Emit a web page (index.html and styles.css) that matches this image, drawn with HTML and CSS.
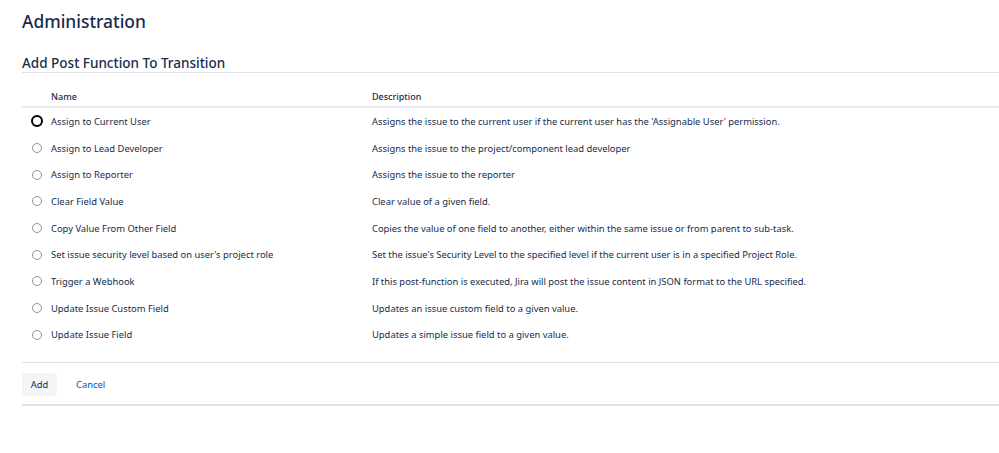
FILE: index.html
```html
<!DOCTYPE html>
<html>
<head>
<meta charset="utf-8">
<link rel="stylesheet" href="styles.css">
</head>
<body>
<div class="page">
  <h1 class="title">Administration</h1>
  <h2 class="subtitle">Add Post Function To Transition</h2>
  <div class="table">
    <div class="row head">
      <div class="cell radio-cell"></div>
      <div class="cell">Name</div>
      <div class="cell">Description</div>
    </div>
    <div class="row">
      <div class="cell radio-cell"><span class="radio focused"></span></div>
      <div class="cell">Assign to Current User</div>
      <div class="cell">Assigns the issue to the current user if the current user has the 'Assignable User' permission.</div>
    </div>
    <div class="row">
      <div class="cell radio-cell"><span class="radio"></span></div>
      <div class="cell">Assign to Lead Developer</div>
      <div class="cell">Assigns the issue to the project/component lead developer</div>
    </div>
    <div class="row">
      <div class="cell radio-cell"><span class="radio"></span></div>
      <div class="cell">Assign to Reporter</div>
      <div class="cell">Assigns the issue to the reporter</div>
    </div>
    <div class="row">
      <div class="cell radio-cell"><span class="radio"></span></div>
      <div class="cell">Clear Field Value</div>
      <div class="cell">Clear value of a given field.</div>
    </div>
    <div class="row">
      <div class="cell radio-cell"><span class="radio"></span></div>
      <div class="cell">Copy Value From Other Field</div>
      <div class="cell">Copies the value of one field to another, either within the same issue or from parent to sub-task.</div>
    </div>
    <div class="row">
      <div class="cell radio-cell"><span class="radio"></span></div>
      <div class="cell">Set issue security level based on user's project role</div>
      <div class="cell">Set the issue's Security Level to the specified level if the current user is in a specified Project Role.</div>
    </div>
    <div class="row">
      <div class="cell radio-cell"><span class="radio"></span></div>
      <div class="cell">Trigger a Webhook</div>
      <div class="cell">If this post-function is executed, Jira will post the issue content in JSON format to the URL specified.</div>
    </div>
    <div class="row">
      <div class="cell radio-cell"><span class="radio"></span></div>
      <div class="cell">Update Issue Custom Field</div>
      <div class="cell">Updates an issue custom field to a given value.</div>
    </div>
    <div class="row">
      <div class="cell radio-cell"><span class="radio"></span></div>
      <div class="cell">Update Issue Field</div>
      <div class="cell">Updates a simple issue field to a given value.</div>
    </div>
  </div>
  <div class="actions">
    <button class="btn">Add</button>
    <a class="link" href="#">Cancel</a>
  </div>
</div>
</body>
</html>
```

FILE: styles.css
```css
* { box-sizing: border-box; }
html, body { margin: 0; padding: 0; background: #fff; }
body {
  font-family: "Noto Sans", "Open Sans", sans-serif;
  color: #172b4d;
}
.page {
  padding: 9px 0 0 22px;
}
.title {
  margin: 0;
  font-size: 17.4px;
  font-weight: 500;
  line-height: 24px;
}
.subtitle {
  margin: 21px 0 0 0;
  font-size: 13.5px;
  font-weight: 500;
  line-height: 18px;
  padding-bottom: 0;
  border-bottom: 1px solid #dfe1e6;
}
.table {
  margin-top: 16px;
  font-size: 9.4px;
}
.row {
  display: grid;
  grid-template-columns: 29px 321px 1fr;
  align-items: center;
  height: 26.7px;
}
.row.head {
  height: 19px;
  align-items: start;
  border-bottom: 2px solid #ebecf0;
  font-weight: 500;
  font-size: 9px;
}
.row.head .cell { line-height: 12px; padding-top: 2px; }
.cell { white-space: nowrap; }
.radio-cell {
  display: flex;
  align-items: center;
  padding-left: 10px;
}
.radio {
  display: inline-block;
  width: 10px;
  height: 10px;
  border: 1px solid #8993a4;
  border-radius: 50%;
}
.radio.focused {
  width: 12px;
  height: 12px;
  margin-left: -1px;
  border: 2.5px solid #000;
}
.actions {
  margin-top: 14px;
  border-top: 1px solid #dfe1e6;
  border-bottom: 2px solid #dfe1e6;
  padding: 10px 0 8px 0;
  display: flex;
  align-items: center;
  gap: 19px;
}
.btn {
  font-family: inherit;
  font-size: 9.4px;
  color: #172b4d;
  background: #f4f5f7;
  border: none;
  border-radius: 3px;
  height: 23px;
  width: 35px;
  padding: 0;
}
.link {
  font-size: 9.4px;
  color: #0052cc;
  text-decoration: none;
}
```
